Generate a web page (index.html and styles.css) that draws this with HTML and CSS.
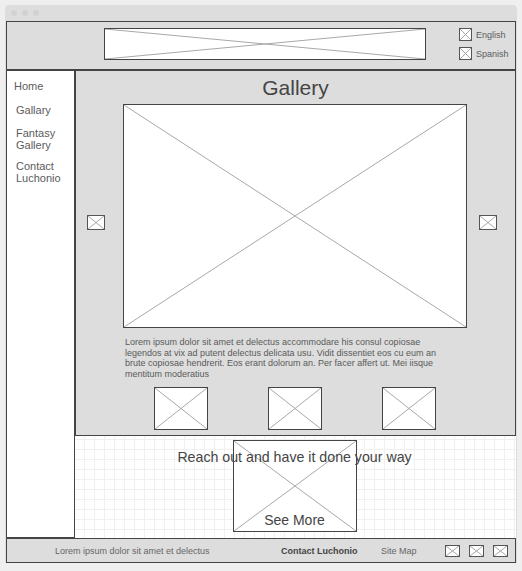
FILE: index.html
```html
<!DOCTYPE html>
<html lang="en">
<head>
  <meta charset="UTF-8" />
  <meta name="viewport" content="width=device-width, initial-scale=1" />
  <title>Luchonio Gallery</title>
  <link rel="stylesheet" href="styles.css">
</head>
<body>
  <div class="window">
    <div class="chrome">
      <span class="dot"></span><span class="dot"></span><span class="dot"></span>
    </div>

    <header class="header">
      <div class="ph logo"><svg viewBox="0 0 10 10" preserveAspectRatio="none"><path d="M0 0L10 10M10 0L0 10"/></svg></div>
      <ul class="langs">
        <li><span class="ph icon"><svg viewBox="0 0 10 10" preserveAspectRatio="none"><path d="M0 0L10 10M10 0L0 10"/></svg></span>English</li>
        <li><span class="ph icon"><svg viewBox="0 0 10 10" preserveAspectRatio="none"><path d="M0 0L10 10M10 0L0 10"/></svg></span>Spanish</li>
      </ul>
    </header>

    <div class="layout">
      <nav class="sidebar">
        <a class="nav-link home" href="#">Home</a>
        <a class="nav-link gallary" href="#">Gallary</a>
        <a class="nav-link fantasy" href="#">Fantasy<br>Gallery</a>
        <a class="nav-link" href="#">Contact<br>Luchonio</a>
      </nav>

      <main class="main">
        <section class="gallery">
          <h1>Gallery</h1>
          <div class="stage">
            <span class="ph arrow left"><svg viewBox="0 0 10 10" preserveAspectRatio="none"><path d="M0 0L10 10M10 0L0 10"/></svg></span>
            <div class="ph big"><svg viewBox="0 0 10 10" preserveAspectRatio="none"><path d="M0 0L10 10M10 0L0 10"/></svg></div>
            <span class="ph arrow right"><svg viewBox="0 0 10 10" preserveAspectRatio="none"><path d="M0 0L10 10M10 0L0 10"/></svg></span>
          </div>
          <p class="caption">Lorem ipsum dolor sit amet et delectus accommodare his consul copiosae legendos at vix ad putent delectus delicata usu. Vidit dissentiet eos cu eum an brute copiosae hendrerit. Eos erant dolorum an. Per facer affert ut. Mei iisque mentitum moderatius</p>
          <div class="thumbs">
            <div class="ph thumb"><svg viewBox="0 0 10 10" preserveAspectRatio="none"><path d="M0 0L10 10M10 0L0 10"/></svg></div>
            <div class="ph thumb"><svg viewBox="0 0 10 10" preserveAspectRatio="none"><path d="M0 0L10 10M10 0L0 10"/></svg></div>
            <div class="ph thumb"><svg viewBox="0 0 10 10" preserveAspectRatio="none"><path d="M0 0L10 10M10 0L0 10"/></svg></div>
          </div>
        </section>

        <section class="cta">
          <div class="ph cta-img"><svg viewBox="0 0 10 10" preserveAspectRatio="none"><path d="M0 0L10 10M10 0L0 10"/></svg></div>
          <h2 class="cta-title">Reach out and have it done your way</h2>
          <a class="cta-more" href="#">See More</a>
        </section>
      </main>
    </div>

    <footer class="footer">
      <span class="foot-text">Lorem ipsum dolor sit amet et delectus</span>
      <a class="foot-contact" href="#">Contact Luchonio</a>
      <a class="foot-map" href="#">Site Map</a>
      <div class="foot-icons">
        <span class="ph ficon"><svg viewBox="0 0 10 10" preserveAspectRatio="none"><path d="M0 0L10 10M10 0L0 10"/></svg></span>
        <span class="ph ficon"><svg viewBox="0 0 10 10" preserveAspectRatio="none"><path d="M0 0L10 10M10 0L0 10"/></svg></span>
        <span class="ph ficon"><svg viewBox="0 0 10 10" preserveAspectRatio="none"><path d="M0 0L10 10M10 0L0 10"/></svg></span>
      </div>
    </footer>
  </div>
</body>
</html>
```

FILE: styles.css
```css
* { box-sizing: border-box; }
body {
  margin: 0;
  background: #efefef;
  font-family: "Liberation Sans", Arial, sans-serif;
  color: #5c5c5c;
}
a { color: inherit; text-decoration: none; }

.window {
  width: 512px;
  margin: 5px 0 0 5px;
  padding: 0 1px;
  background: #ddd;
  border-radius: 4px 4px 0 0;
}
.chrome {
  height: 16px;
  display: flex;
  align-items: center;
  gap: 5px;
  padding-left: 5px;
}
.dot { width: 6px; height: 6px; border-radius: 50%; background: #d2d2d2; }

/* placeholder boxes with an X */
.ph { display: block; border: 1px solid #444; background: #fff; }
.ph svg { display: block; width: 100%; height: 100%; }
.ph path { stroke: #a8a8a8; stroke-width: 1; fill: none; vector-effect: non-scaling-stroke; }

.header {
  height: 49px;
  border: 1px solid #444;
  background: #ddd;
  display: flex;
  align-items: flex-start;
  padding-top: 6px;
}
.logo { width: 322px; height: 32px; margin-left: 97px; }
.langs { list-style: none; margin: 0 0 0 33px; padding: 0; font-size: 9px; }
.langs li { display: flex; align-items: center; gap: 4px; height: 13px; margin-bottom: 6px; }
.icon { width: 13px; height: 13px; border-color: #555; }

.layout { display: grid; grid-template-columns: 69px 441px; height: 468px; }
.sidebar {
  border: 1px solid #444;
  background: #fff;
  padding: 9px 0 0 9px;
}
.nav-link { display: block; font-size: 11px; line-height: 12px; margin-bottom: 9px; }
.home { margin-left: -2px; margin-bottom: 12px; }
.gallary { margin-bottom: 11px; }

.gallery { height: 366px; border: 1px solid #444; background: #ddd; }
.gallery h1 {
  margin: 0;
  font-size: 21px;
  font-weight: normal;
  line-height: 33px;
  text-align: center;
  color: #444;
}
.stage { display: flex; align-items: flex-start; height: 224px; }
.big { width: 344px; height: 224px; margin-left: 18px; }
.arrow { width: 18px; height: 15px; margin-top: 111px; border-color: #555; }
.arrow.left { margin-left: 11px; }
.arrow.right { margin-left: 12px; }
.caption {
  margin: 9px 0 0 49px;
  width: 322px;
  font-size: 9px;
  line-height: 10.5px;
  color: #5a5a5a;
}
.thumbs { display: flex; gap: 60px; margin: 8px 0 0 78px; }
.thumb { width: 54px; height: 43px; }

.cta {
  height: 102px;
  display: grid;
  justify-items: center;
  align-items: start;
  padding-right: 2px;
  background-color: #fff;
  background-image:
    linear-gradient(#f0f0f0 1px, transparent 1px),
    linear-gradient(90deg, #f0f0f0 1px, transparent 1px);
  background-size: 10px 10px;
  background-position: 9px 3px;
}
.cta > * { grid-area: 1 / 1; }
.cta-img { width: 124px; height: 92px; margin-top: 4px; }
.cta-title {
  margin: 13px 0 0;
  font-size: 14.2px;
  font-weight: normal;
  line-height: 17px;
  color: #444;
}
.cta-more { margin-top: 76px; font-size: 14px; line-height: 17px; color: #444; }

.footer {
  height: 25px;
  border: 1px solid #444;
  background: #ddd;
  display: flex;
  align-items: center;
  padding-left: 48px;
  font-size: 9px;
  color: #666;
}
.foot-text { width: 226px; }
.foot-contact { width: 100px; font-weight: bold; color: #444; }
.foot-map { width: 64px; }
.foot-icons { display: flex; gap: 9px; }
.ficon { width: 15px; height: 12px; border-color: #555; }
```
